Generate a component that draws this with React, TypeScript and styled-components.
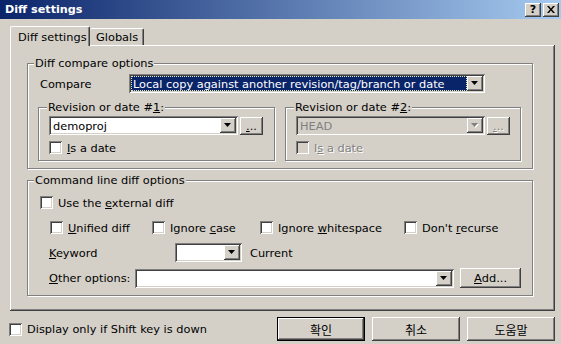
import React from 'react';
import styled, { createGlobalStyle, css } from 'styled-components';

const GlobalStyle = createGlobalStyle`
  html, body {
    margin: 0;
    padding: 0;
    background: #d4d0c8;
  }
  body {
    font-family: "DejaVu Sans", "Noto Sans CJK KR", sans-serif;
    font-size: 11.35px;
    color: #000;
  }
  u {
    text-underline-offset: 1px;
  }
`;

const raised = css`
  box-shadow: inset -1px -1px #404040, inset 1px 1px #fff, inset -2px -2px #808080,
    inset 2px 2px #d4d0c8;
`;

const sunken = css`
  box-shadow: inset 1px 1px #808080, inset -1px -1px #fff, inset 2px 2px #404040,
    inset -2px -2px #d4d0c8;
`;

const Window = styled.div`
  width: 561px;
  height: 344px;
  background: #d4d0c8;
  display: flex;
  flex-direction: column;
  overflow: hidden;
`;

const TitleBar = styled.div`
  height: 19px;
  display: flex;
  align-items: center;
  gap: 2px;
  padding: 0 2px 0 5px;
  background: linear-gradient(to right, #0a246a, #a6caf0);
`;

const Caption = styled.div`
  flex: 1;
  color: #fff;
  font-weight: bold;
  font-size: 11.2px;
`;

const CaptionButton = styled.div`
  width: 16px;
  height: 14px;
  background: #d4d0c8;
  ${raised};
  display: flex;
  align-items: center;
  justify-content: center;
  font-weight: bold;
  font-size: 11px;
  line-height: 14px;
`;

const TabStrip = styled.div`
  display: flex;
  align-items: flex-end;
  margin: 7px 0 0 10px;
`;

const Tab = styled.div<{ $active?: boolean }>`
  box-sizing: border-box;
  display: flex;
  align-items: center;
  background: #d4d0c8;
  border-top: 1px solid #fff;
  border-radius: 2px 2px 0 0;
  box-shadow: inset -1px 0 #808080;
  border-right: 1px solid #404040;
  ${(p) =>
    p.$active
      ? css`
          width: 80px;
          height: 20px;
          margin-bottom: -1px;
          padding-left: 7px;
          border-left: 1px solid #fff;
          position: relative;
          z-index: 1;
        `
      : css`
          width: 54px;
          height: 17px;
          padding-left: 6px;
        `}
`;

const Panel = styled.div`
  box-sizing: border-box;
  margin-left: 10px;
  width: 545px;
  height: 266px;
  padding: 18px 0 0 17px;
  ${raised};
  display: flex;
  flex-direction: column;
`;

const GroupBox = styled.div<{ $w: number; $h: number; $top?: number }>`
  box-sizing: border-box;
  width: ${(p) => p.$w}px;
  height: ${(p) => p.$h}px;
  margin-top: ${(p) => p.$top ?? 0}px;
  border: 1px solid #808080;
  box-shadow: inset 1px 1px #fff, 1px 1px #fff;
  display: flex;
  flex-direction: column;
  flex-shrink: 0;
`;

const GroupTitle = styled.div<{ $left: number }>`
  align-self: flex-start;
  height: 14px;
  line-height: 14px;
  margin: -8px 0 0 ${(p) => p.$left}px;
  padding: 0 1px;
  background: #d4d0c8;
`;

const Row = styled.div<{ $top: number; $left: number; $gap?: number }>`
  display: flex;
  align-items: center;
  margin-top: ${(p) => p.$top}px;
  padding-left: ${(p) => p.$left}px;
  gap: ${(p) => p.$gap ?? 0}px;
`;

const FieldLabel = styled.div<{ $w?: number; $ml?: number }>`
  width: ${(p) => (p.$w ? `${p.$w}px` : 'auto')};
  margin-left: ${(p) => p.$ml ?? 0}px;
  flex-shrink: 0;
  white-space: nowrap;
`;

const Combo = styled.div<{ $w: number; $disabled?: boolean }>`
  box-sizing: border-box;
  width: ${(p) => p.$w}px;
  height: 19px;
  padding: 2px;
  display: flex;
  background: ${(p) => (p.$disabled ? '#d4d0c8' : '#fff')};
  ${sunken};
  flex-shrink: 0;
`;

const ComboText = styled.div<{ $disabled?: boolean }>`
  flex: 1;
  min-width: 0;
  display: flex;
  align-items: center;
  padding-left: 2px;
  white-space: nowrap;
  overflow: hidden;
  color: ${(p) => (p.$disabled ? '#808080' : '#000')};
`;

const Selection = styled.div`
  flex: 1;
  min-width: 0;
  align-self: stretch;
  display: flex;
  align-items: center;
  padding-left: 1px;
  background: #0a246a;
  color: #fff;
  border: 1px dotted #e8e8b0;
  white-space: nowrap;
  overflow: hidden;
`;

const DropButton = styled.div`
  width: 16px;
  flex-shrink: 0;
  background: #d4d0c8;
  ${raised};
  display: flex;
  align-items: center;
  justify-content: center;
`;

const PushButton = styled.div<{
  $w: number;
  $h: number;
  $ml?: number;
  $default?: boolean;
  $disabled?: boolean;
}>`
  box-sizing: border-box;
  width: ${(p) => p.$w}px;
  height: ${(p) => p.$h}px;
  margin-left: ${(p) => p.$ml ?? 0}px;
  flex-shrink: 0;
  display: flex;
  align-items: center;
  justify-content: center;
  background: #d4d0c8;
  ${(p) =>
    p.$default
      ? css`
          border: 1px solid #000;
          ${raised};
        `
      : raised};
  color: ${(p) => (p.$disabled ? '#808080' : '#000')};
  text-shadow: ${(p) => (p.$disabled ? '1px 1px #fff' : 'none')};
`;

const Korean = styled.span`
  font-family: "Noto Sans CJK KR", "DejaVu Sans", sans-serif;
  font-size: 12px;
`;

const Check = styled.div<{ $disabled?: boolean }>`
  box-sizing: border-box;
  width: 13px;
  height: 13px;
  flex-shrink: 0;
  background: ${(p) => (p.$disabled ? '#d4d0c8' : '#fff')};
  ${sunken};
`;

const CheckItem = styled.div<{ $w?: number; $disabled?: boolean }>`
  display: flex;
  align-items: center;
  gap: 5px;
  width: ${(p) => (p.$w ? `${p.$w}px` : 'auto')};
  height: 13px;
  white-space: nowrap;
  color: ${(p) => (p.$disabled ? '#808080' : '#000')};
  text-shadow: ${(p) => (p.$disabled ? '1px 1px #fff' : 'none')};
`;

const Footer = styled.div`
  display: flex;
  align-items: center;
  margin-top: 6px;
  height: 24px;
  padding: 0 6px 0 9px;
  gap: 7px;
`;

const Spacer = styled.div`
  flex: 1;
`;

const Arrow = ({ disabled }: { disabled?: boolean }) => (
  <svg width="8" height="5" viewBox="0 0 8 5">
    {disabled && <polygon points="1,1 8,1 4.5,5" fill="#fff" />}
    <polygon points="0,0 7,0 3.5,4" fill={disabled ? '#808080' : '#000'} />
  </svg>
);

const CloseGlyph = () => (
  <svg width="8" height="7" viewBox="0 0 8 7">
    <path d="M0,0h2l2,2.5l2,-2.5h2l-3,3.5l3,3.5h-2l-2,-2.5l-2,2.5h-2l3,-3.5z" fill="#000" />
  </svg>
);

const CheckBox = ({
  children,
  w,
  disabled,
}: {
  children: React.ReactNode;
  w?: number;
  disabled?: boolean;
}) => (
  <CheckItem $w={w} $disabled={disabled}>
    <Check $disabled={disabled} />
    <span>{children}</span>
  </CheckItem>
);

const ComboBox = ({ w, children }: { w: number; children?: React.ReactNode }) => (
  <Combo $w={w}>
    <ComboText>{children}</ComboText>
    <DropButton>
      <Arrow />
    </DropButton>
  </Combo>
);

export default function App() {
  return (
    <>
      <GlobalStyle />
      <Window>
        <TitleBar>
          <Caption>Diff settings</Caption>
          <CaptionButton>?</CaptionButton>
          <CaptionButton>
            <CloseGlyph />
          </CaptionButton>
        </TitleBar>

        <TabStrip>
          <Tab $active>Diff settings</Tab>
          <Tab>Globals</Tab>
        </TabStrip>

        <Panel>
          <GroupBox $w={506} $h={106}>
            <GroupTitle $left={6}>Diff compare options</GroupTitle>
            <Row $top={4} $left={12}>
              <FieldLabel $w={89}>Compare</FieldLabel>
              <Combo $w={356}>
                <Selection>Local copy against another revision/tag/branch or date</Selection>
                <DropButton>
                  <Arrow />
                </DropButton>
              </Combo>
            </Row>
            <Row $top={14} $left={10} $gap={10}>
              <GroupBox $w={237} $h={54}>
                <GroupTitle $left={8}>
                  Revision or date #<u>1</u>:
                </GroupTitle>
                <Row $top={2} $left={10} $gap={2}>
                  <ComboBox w={189}>demoproj</ComboBox>
                  <PushButton $w={23} $h={18}>
                    <u>.</u>..
                  </PushButton>
                </Row>
                <Row $top={6} $left={10}>
                  <CheckBox>
                    <u>I</u>s a date
                  </CheckBox>
                </Row>
              </GroupBox>
              <GroupBox $w={236} $h={54}>
                <GroupTitle $left={8}>
                  Revision or date #<u>2</u>:
                </GroupTitle>
                <Row $top={2} $left={10} $gap={2}>
                  <Combo $w={189} $disabled>
                    <ComboText $disabled>HEAD</ComboText>
                    <DropButton>
                      <Arrow disabled />
                    </DropButton>
                  </Combo>
                  <PushButton $w={23} $h={18} $disabled>
                    <u>.</u>..
                  </PushButton>
                </Row>
                <Row $top={6} $left={10}>
                  <CheckBox disabled>
                    I<u>s</u> a date
                  </CheckBox>
                </Row>
              </GroupBox>
            </Row>
          </GroupBox>

          <GroupBox $w={506} $h={116} $top={11}>
            <GroupTitle $left={6}>Command line diff options</GroupTitle>
            <Row $top={9} $left={12}>
              <CheckBox>
                Use the <u>e</u>xternal diff
              </CheckBox>
            </Row>
            <Row $top={12} $left={22}>
              <CheckBox w={102}>
                <u>U</u>nified diff
              </CheckBox>
              <CheckBox w={108}>
                Ignore <u>c</u>ase
              </CheckBox>
              <CheckBox w={144}>
                Ignore <u>w</u>hitespace
              </CheckBox>
              <CheckBox>
                Don't <u>r</u>ecurse
              </CheckBox>
            </Row>
            <Row $top={9} $left={21}>
              <FieldLabel $w={126}>
                <u>K</u>eyword
              </FieldLabel>
              <ComboBox w={67} />
              <FieldLabel $ml={8}>Current</FieldLabel>
            </Row>
            <Row $top={6} $left={21}>
              <FieldLabel $w={86}>
                <u>O</u>ther options:
              </FieldLabel>
              <ComboBox w={319} />
              <PushButton $w={61} $h={20} $ml={6}>
                <u>A</u>dd...
              </PushButton>
            </Row>
          </GroupBox>
        </Panel>

        <Footer>
          <CheckBox>Display only if Shift key is down</CheckBox>
          <Spacer />
          <PushButton $w={88} $h={24} $default>
            <Korean>확인</Korean>
          </PushButton>
          <PushButton $w={88} $h={24}>
            <Korean>취소</Korean>
          </PushButton>
          <PushButton $w={88} $h={24}>
            <Korean>도움말</Korean>
          </PushButton>
        </Footer>
      </Window>
    </>
  );
}
